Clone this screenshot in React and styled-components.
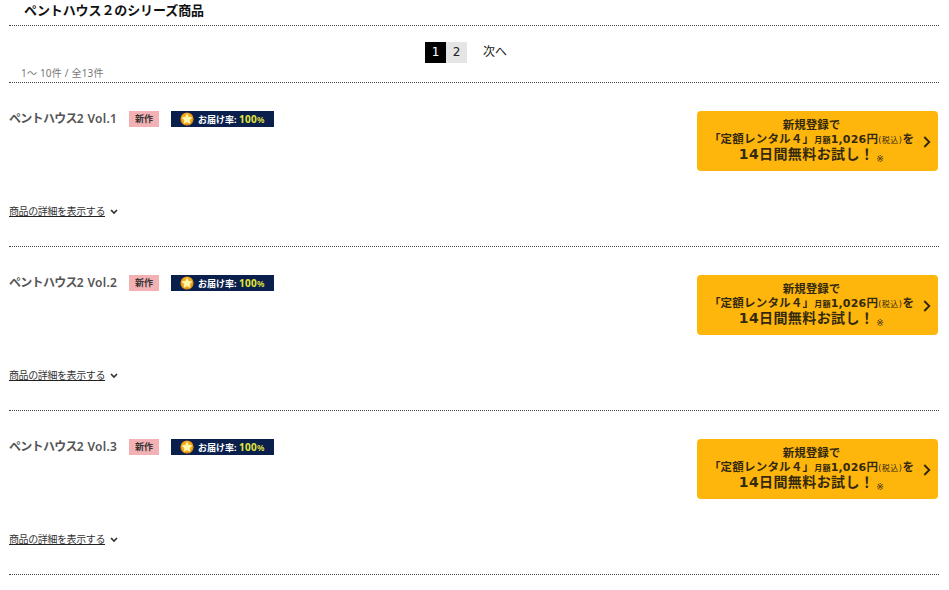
import React from 'react'
import styled, { createGlobalStyle } from 'styled-components'

const items = [
    { id: 1, title: 'Vol.1' },
    { id: 2, title: 'Vol.2' },
    { id: 3, title: 'Vol.3' },
]

const Chevron = ({ width, height, stroke, down }) => (
    <svg width={width} height={height} viewBox={down ? '0 0 8 6' : '0 0 8 12'} fill="none">
        <path d={down ? 'M1 1L4 4L7 1' : 'M1.3 1L6.3 6L1.3 11'} stroke={stroke} strokeWidth={down ? 1.7 : 1.8} />
    </svg>
)

const StarIcon = () => (
    <svg width="14" height="14" viewBox="0 0 14 14">
        <circle cx="7" cy="7" r="6.6" fill="#d98a14" />
        <circle cx="7" cy="6.6" r="5.6" fill="#f3ac22" />
        <path d="M7 1.4L8.7 5L12.5 5.5L9.7 8.1L10.4 12L7 10.1L3.6 12L4.3 8.1L1.5 5.5L5.3 5Z" fill="#fff7a8" />
    </svg>
)

const SeriesItem = ({ title }) => (
    <Item>
        <Info>
            <TitleRow>
                <Title><Kana>ペントハウス</Kana>2 {title}</Title>
                <NewTag>新作</NewTag>
                <RateTag>
                    <StarIcon />
                    <RateLabel>お届け率:</RateLabel>
                    <RateValue>100<small>%</small></RateValue>
                </RateTag>
            </TitleRow>
            <Detail href="#">
                <span>商品の詳細を表示する</span>
                <Chevron width={8} height={6} stroke="#333" down />
            </Detail>
        </Info>
        <TrialButton>
            <TrialText>
                <LineTop>新規登録で</LineTop>
                <LinePlan>「定額レンタル４」<Small>月額</Small><Price>1,026</Price>円<Small $light>(税込)</Small>を</LinePlan>
                <LineTrial>14日間無料お試し！<Note>※</Note></LineTrial>
            </TrialText>
            <Chevron width={8} height={12} stroke="#2b2410" />
        </TrialButton>
    </Item>
)

export default function App() {
    return (
        <Page>
            <GlobalStyle />
            <Heading>ペントハウス２のシリーズ商品</Heading>
            <Pager>
                <PageNumber $current>1</PageNumber>
                <PageNumber>2</PageNumber>
                <Next href="#">次へ</Next>
            </Pager>
            <Count>1～ 10件 / 全13件</Count>
            {items.map(item => <SeriesItem key={item.id} title={item.title} />)}
        </Page>
    )
}

const GlobalStyle = createGlobalStyle`
    * {
        box-sizing: border-box;
    }

    body {
        margin: 0;
        background: #fff;
        color: #333;
        font-family: "Noto Sans", "Noto Sans CJK JP", sans-serif;
    }

    a {
        color: inherit;
        text-decoration: none;
    }
`

const Page = styled.div`
    width: 930px;
    height: 590px;
    margin-left: 9px;
    overflow: hidden;
`

const Heading = styled.h1`
    height: 26px;
    margin: 0;
    padding-left: 15px;
    border-bottom: 1px dotted #444;
    color: #111;
    font-size: 13px;
    font-weight: 700;
    line-height: 20px;
    letter-spacing: -0.1px;
`

const Pager = styled.nav`
    display: flex;
    height: 37px;
    padding: 16px 0 0 416px;
    font-family: "DejaVu Sans", "Noto Sans CJK JP", sans-serif;
    font-size: 12px;
    line-height: 20px;
`

const PageNumber = styled.span`
    width: 21px;
    height: 21px;
    text-align: center;
    color: ${props => props.$current ? '#fff' : '#222'};
    background: ${props => props.$current ? '#000' : '#e5e5e5'};
`

const Next = styled.a`
    margin-left: 16px;
    color: #222;
`

const Count = styled.p`
    height: 20px;
    margin: 0;
    padding-left: 12px;
    border-bottom: 1px dotted #444;
    color: #777;
    font-size: 10px;
    line-height: 21px;
    letter-spacing: 0.2px;
    white-space: pre;
`

const Item = styled.section`
    display: flex;
    justify-content: space-between;
    height: 164px;
    padding: 28px 1px 0 0;
    border-bottom: 1px dotted #444;
`

const Info = styled.div`
    display: flex;
    flex-direction: column;
`

const TitleRow = styled.div`
    display: flex;
    height: 16px;
`

const Title = styled.h2`
    width: 120px;
    margin: 0;
    color: #555;
    font-size: 12px;
    font-weight: 600;
    line-height: 16px;
    letter-spacing: 0.3px;
    white-space: nowrap;
`

const Kana = styled.span`
    letter-spacing: -0.7px;
`

const NewTag = styled.span`
    width: 30px;
    height: 16px;
    margin-right: 12px;
    background: #f3b1b3;
    color: #333;
    font-size: 9px;
    font-weight: 700;
    line-height: 15px;
    text-align: center;
`

const RateTag = styled.span`
    display: flex;
    align-items: center;
    width: 103px;
    height: 16px;
    padding-left: 9px;
    background: #0b1f4d;
    color: #fff;
    font-size: 9px;
    font-weight: 700;
    line-height: 15px;
    white-space: nowrap;
`

const RateLabel = styled.span`
    width: 41px;
    margin-left: 4px;
`

const RateValue = styled.span`
    color: #e3e83a;
    font-size: 10px;
    letter-spacing: 0.3px;

    small {
        font-size: 8.5px;
        font-weight: 600;
    }
`

const Detail = styled.a`
    display: flex;
    align-items: center;
    margin-top: 77px;
    font-size: 10px;
    line-height: 14px;

    span {
        width: 96px;
        height: 13px;
        margin-right: 5px;
        border-bottom: 1px solid #222;
        letter-spacing: -0.4px;
        white-space: nowrap;
    }

    svg {
        margin-top: 2px;
    }
`

const TrialButton = styled.button`
    display: flex;
    align-items: center;
    justify-content: space-between;
    width: 241px;
    height: 60px;
    padding: 0 7px 0 13px;
    border: none;
    border-radius: 4px;
    background: #ffb60c;
    color: #33290f;
    font-family: "DejaVu Sans", "Noto Sans CJK JP", sans-serif;
    font-weight: 700;
    white-space: nowrap;

    > svg {
        margin-top: 2px;
    }
`

const TrialText = styled.span`
    display: flex;
    flex-direction: column;
    align-items: center;
    width: 203px;
`

const LineTop = styled.span`
    height: 13px;
    font-size: 11.5px;
    line-height: 13px;
`

const LinePlan = styled.span`
    height: 14px;
    font-size: 11.5px;
    line-height: 14px;
    letter-spacing: 0.2px;
`

const Small = styled.span`
    font-size: 8px;
    font-weight: ${props => props.$light ? 400 : 700};
    letter-spacing: ${props => props.$light ? '0.5px' : '0.2px'};
`

const Price = styled.span`
    font-size: 11px;
`

const LineTrial = styled.span`
    height: 17px;
    font-size: 14px;
    line-height: 17px;
    letter-spacing: 0.4px;
`

const Note = styled.span`
    margin-left: 2px;
    font-size: 9px;
    font-weight: 400;
    vertical-align: -3px;
`
